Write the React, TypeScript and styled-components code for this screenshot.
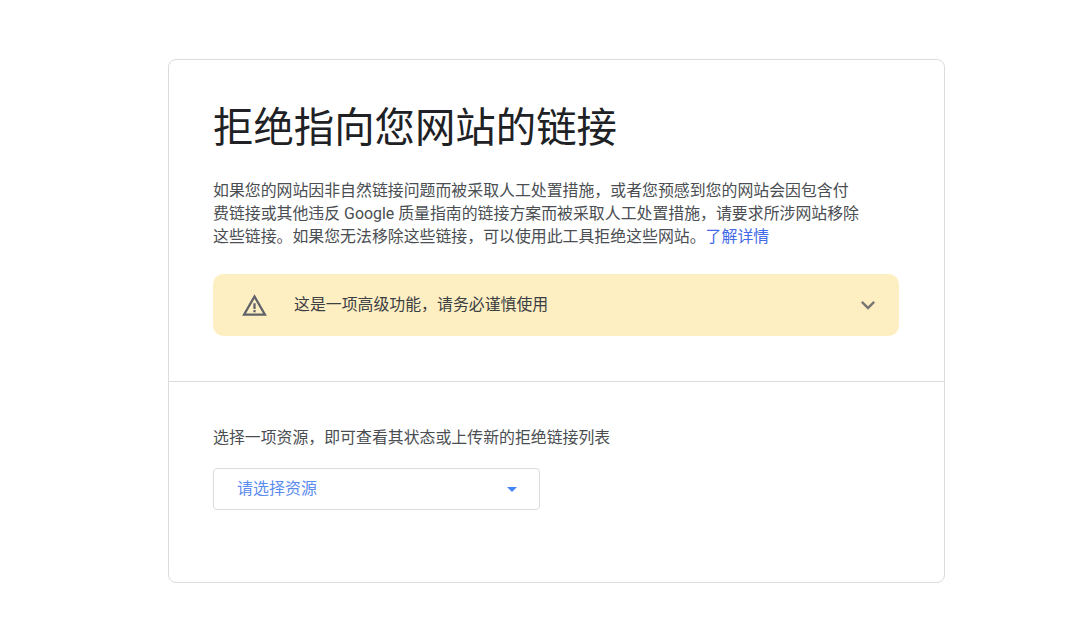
import React from "react";
import styled, { createGlobalStyle } from "styled-components";

const GlobalStyle = createGlobalStyle`
  html, body {
    margin: 0;
    padding: 0;
    background: #fff;
    font-family: Roboto, "Liberation Sans", "Noto Sans CJK SC", sans-serif;
  }
`;

const Page = styled.div`
  width: 1080px;
  height: 640px;
  padding: 59px 0 0 168px;
  box-sizing: border-box;
  display: flex;
  align-items: flex-start;
  overflow: hidden;
`;

const Card = styled.div`
  width: 777px;
  height: 524px;
  box-sizing: border-box;
  border: 1px solid #dadce0;
  border-radius: 8px;
  background: #fff;
`;

const TopSection = styled.section`
  padding: 41px 45px 45px 44px;
  border-bottom: 1px solid #dadce0;
`;

const Title = styled.h1`
  margin: 0 0 22px;
  font-size: 40.4px;
  line-height: 56px;
  font-weight: 400;
  color: #202124;
`;

const Description = styled.p`
  margin: 0 0 26px;
  width: 650px;
  font-size: 15.9px;
  line-height: 23px;
  color: #4a4e52;
`;

const Link = styled.a`
  color: #4169e8;
  text-decoration: none;
`;

const Warning = styled.div`
  height: 62px;
  display: flex;
  align-items: center;
  padding: 0 17px 0 28px;
  background: #feefc3;
  border-radius: 10px;
`;

const WarningText = styled.span`
  flex: 1;
  margin: -4px 0 0 26px;
  font-size: 15.9px;
  color: #3c4043;
`;

const BottomSection = styled.section`
  padding: 45px 44px 0;
`;

const Prompt = styled.p`
  margin: 0 0 19px;
  font-size: 15.9px;
  line-height: 22px;
  color: #4a4e52;
`;

const Select = styled.div`
  width: 327px;
  height: 42px;
  box-sizing: border-box;
  display: flex;
  align-items: center;
  justify-content: space-between;
  padding: 0 22px 0 23px;
  border: 1px solid #dadce0;
  border-radius: 4px;
`;

const SelectLabel = styled.span`
  margin-top: -5px;
  font-size: 16px;
  color: #5b8def;
`;

const Caret = styled.span`
  width: 0;
  height: 0;
  border-left: 5.5px solid transparent;
  border-right: 5.5px solid transparent;
  border-top: 5.5px solid #4285f4;
`;

const WarningIcon = () => (
  <svg width="27" height="27" viewBox="0 0 24 24" fill="#5f6368">
    <path d="M12 5.99 19.53 19H4.47L12 5.99M12 2 1 21h22L12 2z" />
    <path d="M13 16h-2v2h2zM13 10h-2v5h2z" />
  </svg>
);

const ChevronIcon = () => (
  <svg width="28" height="28" viewBox="0 0 24 24" fill="#5f6368" opacity="0.85">
    <path d="M7.41 8.59 12 13.17l4.59-4.58L18 10l-6 6-6-6z" />
  </svg>
);

export default function App() {
  return (
    <>
      <GlobalStyle />
      <Page>
        <Card>
          <TopSection>
            <Title>拒绝指向您网站的链接</Title>
            <Description>
              如果您的网站因非自然链接问题而被采取人工处置措施，或者您预感到您的网站会因包含付费链接或其他违反 Google 质量指南的链接方案而被采取人工处置措施，请要求所涉网站移除这些链接。如果您无法移除这些链接，可以使用此工具拒绝这些网站。
              <Link href="#">了解详情</Link>
            </Description>
            <Warning>
              <WarningIcon />
              <WarningText>这是一项高级功能，请务必谨慎使用</WarningText>
              <ChevronIcon />
            </Warning>
          </TopSection>
          <BottomSection>
            <Prompt>选择一项资源，即可查看其状态或上传新的拒绝链接列表</Prompt>
            <Select>
              <SelectLabel>请选择资源</SelectLabel>
              <Caret />
            </Select>
          </BottomSection>
        </Card>
      </Page>
    </>
  );
}
